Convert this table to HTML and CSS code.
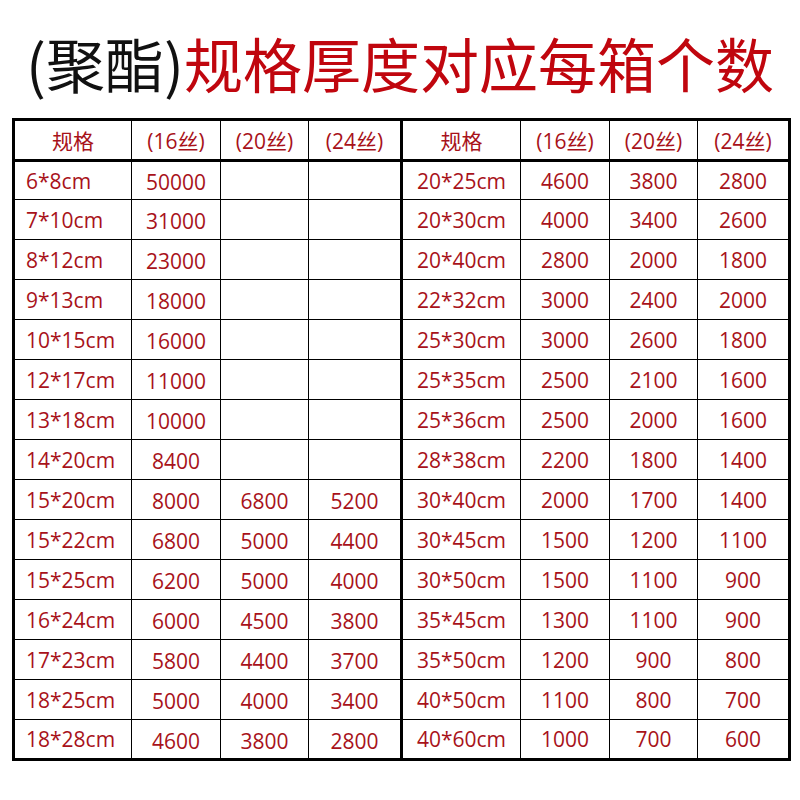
FILE: index.html
```html
<!DOCTYPE html>
<html lang="zh-CN">
<head>
<meta charset="utf-8">
<title>规格厚度对应每箱个数</title>
<link rel="stylesheet" href="styles.css">
</head>
<body>
<h1 class="title"><span class="black">(聚酯)</span>规格厚度对应每箱个数</h1>
<div class="sheet">
  <div class="half left">
    <div class="row head"><div class="c c1">规格</div><div class="c c2">(16丝)</div><div class="c c3">(20丝)</div><div class="c c4">(24丝)</div></div>
    <div class="row first"><div class="c c1 spec">6*8cm</div><div class="c c2 n">50000</div><div class="c c3 n"></div><div class="c c4 n"></div></div>
    <div class="row"><div class="c c1 spec">7*10cm</div><div class="c c2 n">31000</div><div class="c c3 n"></div><div class="c c4 n"></div></div>
    <div class="row"><div class="c c1 spec">8*12cm</div><div class="c c2 n">23000</div><div class="c c3 n"></div><div class="c c4 n"></div></div>
    <div class="row"><div class="c c1 spec">9*13cm</div><div class="c c2 n">18000</div><div class="c c3 n"></div><div class="c c4 n"></div></div>
    <div class="row"><div class="c c1 spec">10*15cm</div><div class="c c2 n">16000</div><div class="c c3 n"></div><div class="c c4 n"></div></div>
    <div class="row"><div class="c c1 spec">12*17cm</div><div class="c c2 n">11000</div><div class="c c3 n"></div><div class="c c4 n"></div></div>
    <div class="row"><div class="c c1 spec">13*18cm</div><div class="c c2 n">10000</div><div class="c c3 n"></div><div class="c c4 n"></div></div>
    <div class="row"><div class="c c1 spec">14*20cm</div><div class="c c2 n">8400</div><div class="c c3 n"></div><div class="c c4 n"></div></div>
    <div class="row"><div class="c c1 spec">15*20cm</div><div class="c c2 n">8000</div><div class="c c3 n">6800</div><div class="c c4 n">5200</div></div>
    <div class="row"><div class="c c1 spec">15*22cm</div><div class="c c2 n">6800</div><div class="c c3 n">5000</div><div class="c c4 n">4400</div></div>
    <div class="row"><div class="c c1 spec">15*25cm</div><div class="c c2 n">6200</div><div class="c c3 n">5000</div><div class="c c4 n">4000</div></div>
    <div class="row"><div class="c c1 spec">16*24cm</div><div class="c c2 n">6000</div><div class="c c3 n">4500</div><div class="c c4 n">3800</div></div>
    <div class="row"><div class="c c1 spec">17*23cm</div><div class="c c2 n">5800</div><div class="c c3 n">4400</div><div class="c c4 n">3700</div></div>
    <div class="row"><div class="c c1 spec">18*25cm</div><div class="c c2 n">5000</div><div class="c c3 n">4000</div><div class="c c4 n">3400</div></div>
    <div class="row last"><div class="c c1 spec">18*28cm</div><div class="c c2 n">4600</div><div class="c c3 n">3800</div><div class="c c4 n">2800</div></div>
  </div>
  <div class="half right">
    <div class="row head"><div class="c c1">规格</div><div class="c c2">(16丝)</div><div class="c c3">(20丝)</div><div class="c c4">(24丝)</div></div>
    <div class="row first"><div class="c c1">20*25cm</div><div class="c c2">4600</div><div class="c c3">3800</div><div class="c c4">2800</div></div>
    <div class="row"><div class="c c1">20*30cm</div><div class="c c2">4000</div><div class="c c3">3400</div><div class="c c4">2600</div></div>
    <div class="row"><div class="c c1">20*40cm</div><div class="c c2">2800</div><div class="c c3">2000</div><div class="c c4">1800</div></div>
    <div class="row"><div class="c c1">22*32cm</div><div class="c c2">3000</div><div class="c c3">2400</div><div class="c c4">2000</div></div>
    <div class="row"><div class="c c1">25*30cm</div><div class="c c2">3000</div><div class="c c3">2600</div><div class="c c4">1800</div></div>
    <div class="row"><div class="c c1">25*35cm</div><div class="c c2">2500</div><div class="c c3">2100</div><div class="c c4">1600</div></div>
    <div class="row"><div class="c c1">25*36cm</div><div class="c c2">2500</div><div class="c c3">2000</div><div class="c c4">1600</div></div>
    <div class="row"><div class="c c1">28*38cm</div><div class="c c2">2200</div><div class="c c3">1800</div><div class="c c4">1400</div></div>
    <div class="row"><div class="c c1">30*40cm</div><div class="c c2">2000</div><div class="c c3">1700</div><div class="c c4">1400</div></div>
    <div class="row"><div class="c c1">30*45cm</div><div class="c c2">1500</div><div class="c c3">1200</div><div class="c c4">1100</div></div>
    <div class="row"><div class="c c1">30*50cm</div><div class="c c2">1500</div><div class="c c3">1100</div><div class="c c4">900</div></div>
    <div class="row"><div class="c c1">35*45cm</div><div class="c c2">1300</div><div class="c c3">1100</div><div class="c c4">900</div></div>
    <div class="row"><div class="c c1">35*50cm</div><div class="c c2">1200</div><div class="c c3">900</div><div class="c c4">800</div></div>
    <div class="row"><div class="c c1">40*50cm</div><div class="c c2">1100</div><div class="c c3">800</div><div class="c c4">700</div></div>
    <div class="row last"><div class="c c1">40*60cm</div><div class="c c2">1000</div><div class="c c3">700</div><div class="c c4">600</div></div>
  </div>
</div>
</body>
</html>
```
FILE: styles.css
```css
html, body {
  margin: 0;
  padding: 0;
  background: #ffffff;
}
body {
  width: 800px;
  height: 800px;
  overflow: hidden;
  font-family: "Open Sans", "Noto Sans CJK SC", sans-serif;
}
.title {
  margin: 0;
  height: 84px;
  padding-top: 34px;
  box-sizing: content-box;
  font-family: "Noto Sans CJK SC", sans-serif;
  font-weight: 400;
  font-size: 59px;
  line-height: 58px;
  text-align: center;
  color: #c0060e;
  white-space: nowrap;
}
.title .black {
  color: #111111;
}
.sheet {
  margin-left: 12px;
  width: 773px;
  border: 3px solid #000;
  display: flex;
}
.half {
  width: 385px;
  display: flex;
  flex-direction: column;
}
.half.left {
  border-right: 3px solid #000;
}
.row {
  display: flex;
  height: 40px;
  box-sizing: border-box;
  border-bottom: 1px solid #000;
}
.row.head {
  height: 41px;
  border-bottom: 3px solid #000;
}
.row.first {
  height: 38px;
}
.row.last {
  height: 38px;
  border-bottom: none;
}
.c {
  box-sizing: border-box;
  display: flex;
  align-items: center;
  justify-content: center;
  font-size: 21px;
  color: #a8121a;
  border-right: 1px solid #000;
  white-space: nowrap;
}
.c4 {
  border-right: none;
}
.left .c1 { width: 117px; }
.left .c2 { width: 89px; }
.left .c3 { width: 88px; }
.left .c4 { width: 91px; }
.right .c1 { width: 118px; }
.right .c2 { width: 89px; }
.right .c3 { width: 88px; }
.right .c4 { width: 90px; }
.c.spec {
  justify-content: flex-start;
  padding-left: 11px;
}
.c.n {
  padding-top: 3px;
}
```
